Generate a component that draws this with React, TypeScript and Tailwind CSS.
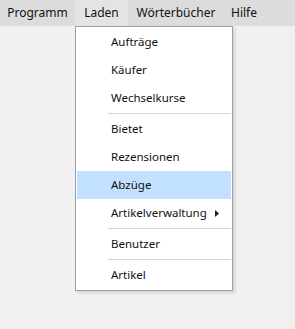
import React from "react";

type Entry = { label: string; sub?: boolean; active?: boolean } | "sep";

const entries: Entry[] = [
  { label: "Aufträge" },
  { label: "Käufer" },
  { label: "Wechselkurse" },
  "sep",
  { label: "Bietet" },
  { label: "Rezensionen" },
  { label: "Abzüge", active: true },
  { label: "Artikelverwaltung", sub: true },
  "sep",
  { label: "Benutzer" },
  "sep",
  { label: "Artikel" },
];

const topMenu = ["Programm", "Laden", "Wörterbücher", "Hilfe"];

export default function App() {
  return (
    <div
      className="relative h-[329px] w-[295px] overflow-hidden bg-[#f0f0f0] text-[11.5px] text-[#111]"
      style={{ fontFamily: '"Noto Sans", "Open Sans", sans-serif' }}
    >
      <div className="flex h-[26px] bg-[#dcdcdc] text-[12px]">
        {topMenu.map((m) => (
          <div
            key={m}
            className={
              m === "Laden"
                ? "flex h-full w-[53px] items-center justify-center bg-[#e4e4e4]"
                : m === "Programm"
                  ? "flex h-full w-[75px] items-center justify-center"
                  : m === "Wörterbücher"
                    ? "flex h-full w-[96px] items-center justify-center"
                    : "flex h-full w-[40px] items-center justify-center"
            }
          >
            {m}
          </div>
        ))}
      </div>

      <div className="absolute left-[75px] top-[26px] w-[158px] border border-[#a0a0a0] bg-white p-px shadow-[2px_2px_3px_rgba(0,0,0,0.12)]">
        {entries.map((e, i) =>
          e === "sep" ? (
            <div key={i} className="flex h-[3px] items-center pl-[31px]">
              <div className="h-px w-full bg-[#d7d7d7]" />
            </div>
          ) : (
            <div
              key={i}
              className={
                e.active
                  ? "flex h-[28px] items-center bg-[#c2e0ff] pl-[34px]"
                  : "flex h-[28px] items-center pl-[34px]"
              }
            >
              <span className="flex-1">{e.label}</span>
              {e.sub && (
                <svg width="4" height="7" viewBox="0 0 4 7" className="mr-[12px]">
                  <path d="M0 0L4 3.5L0 7Z" fill="#222" />
                </svg>
              )}
            </div>
          )
        )}
      </div>
    </div>
  );
}
